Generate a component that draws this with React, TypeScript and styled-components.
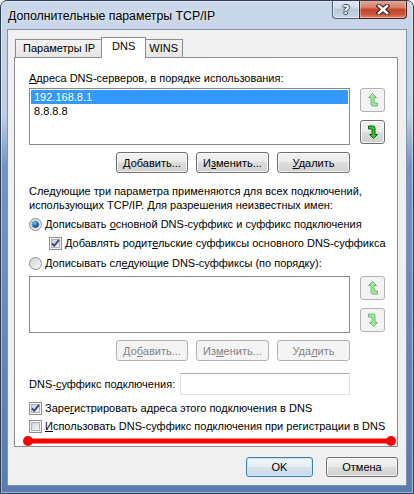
import React from 'react';
import styled, { createGlobalStyle, css } from 'styled-components';

const GlobalStyle = createGlobalStyle`
  html, body {
    margin: 0;
    padding: 0;
    background: #ffffff;
  }
  body {
    font-family: 'Liberation Sans', Arial, sans-serif;
    font-size: 11px;
    color: #000;
  }
  * {
    box-sizing: border-box;
  }
`;

const Window = styled.div`
  width: 414px;
  height: 494px;
  display: flex;
  flex-direction: column;
  border: 1px solid #2c3d55;
  border-radius: 7px 7px 0 0;
  background: linear-gradient(
    to bottom,
    #c9d7ea 0px,
    #bfcee3 115px,
    #7395c6 165px,
    #5a7baf 100%
  );
  box-shadow: inset 0 0 0 1px rgba(255, 255, 255, 0.45);
  overflow: hidden;
`;

const TitleBar = styled.div`
  height: 28px;
  flex: none;
  display: flex;
  align-items: flex-start;
`;

const Title = styled.div`
  flex: 1;
  padding: 7px 0 0 7px;
  font-size: 12.3px;
  line-height: 16px;
  text-shadow: 0 0 6px rgba(255, 255, 255, 0.9);
`;

const CaptionButtons = styled.div`
  display: flex;
  margin: -1px 6px 0 0;
`;

const HelpButton = styled.div`
  width: 27px;
  height: 19px;
  border: 1px solid #4c5d76;
  border-top: none;
  border-right: none;
  border-radius: 0 0 0 4px;
  background: linear-gradient(#e3eaf4 0%, #cfdbea 45%, #b6c6db 50%, #c8d5e6 100%);
  box-shadow: inset 0 0 0 1px rgba(255, 255, 255, 0.55);
  display: flex;
  align-items: center;
  justify-content: center;
  color: #fff;
  font-family: 'DejaVu Sans', sans-serif;
  font-weight: bold;
  font-size: 13px;
  text-shadow: 1px 0 0 #34465e, -1px 0 0 #34465e, 0 1px 0 #34465e, 0 -1px 0 #34465e;
`;

const CloseButton = styled.div`
  width: 48px;
  height: 19px;
  border: 1px solid #4a2018;
  border-top: none;
  border-radius: 0 0 4px 0;
  background: linear-gradient(#eaae9e 0%, #d67a66 45%, #c3432b 50%, #cc553b 80%, #e18b70 100%);
  box-shadow: inset 0 0 0 1px rgba(255, 255, 255, 0.35);
  display: flex;
  align-items: center;
  justify-content: center;
`;

const Client = styled.div`
  flex: 1;
  margin: 0 6px 7px 6px;
  border: 1px solid #8192aa;
  background: #f0f0f0;
  display: flex;
  flex-direction: column;
  padding: 0 8px 8px 6px;
`;

const TabControl = styled.div`
  flex: 1;
  display: flex;
  flex-direction: column;
`;

const TabRow = styled.div`
  height: 27px;
  flex: none;
  display: flex;
  align-items: flex-end;
  padding-left: 1px;
`;

const Tab = styled.div<{ $active?: boolean; $pad: number }>`
  height: 18px;
  padding: 0 ${(p) => p.$pad}px;
  border: 1px solid #898c95;
  border-bottom: none;
  line-height: 17px;
  background: linear-gradient(#f3f3f3, #e6e6e6);
  white-space: nowrap;
  ${(p) =>
    p.$active &&
    css`
      position: relative;
      z-index: 1;
      height: 21px;
      margin: 0 -2px -1px;
      background: #fff;
      line-height: 16px;
    `}
`;

const Panel = styled.div`
  flex: 1;
  border: 1px solid #898c95;
  background: #fff;
  padding: 13px 11px 0 14px;
  display: flex;
  flex-direction: column;
`;

const Label = styled.div`
  line-height: 15px;
  white-space: nowrap;
`;

const Key = styled.u`
  text-decoration: underline;
  text-underline-offset: 1px;
`;

const ListRow = styled.div<{ $top: number }>`
  display: flex;
  gap: 10px;
  align-items: flex-start;
  margin-top: ${(p) => p.$top}px;
`;

const ListBox = styled.div`
  width: 321px;
  height: 57px;
  border: 1px solid #828790;
  background: #fff;
  padding: 1px 0 0 1px;
`;

const ListItem = styled.div<{ $selected?: boolean }>`
  height: 14px;
  line-height: 14px;
  padding-left: 3px;
  margin-right: 1px;
  ${(p) =>
    p.$selected &&
    css`
      background: #3399ff;
      color: #fff;
    `}
`;

const ArrowColumn = styled.div`
  display: flex;
  flex-direction: column;
  gap: 8px;
`;

const buttonSkin = css<{ $disabled?: boolean }>`
  border: 1px solid #707070;
  border-radius: 3px;
  background: linear-gradient(#f2f2f2 0%, #ebebeb 50%, #dddddd 50%, #cfcfcf 100%);
  box-shadow: inset 0 0 0 1px rgba(255, 255, 255, 0.75);
  ${(p) =>
    p.$disabled &&
    css`
      border-color: #adb2b5;
      background: #f4f4f4;
      color: #838383;
      box-shadow: none;
    `}
`;

const ArrowButton = styled.div<{ $disabled?: boolean }>`
  ${buttonSkin};
  width: 25px;
  height: 24px;
  display: flex;
  align-items: center;
  justify-content: center;
`;

const ButtonRow = styled.div`
  width: 321px;
  display: flex;
  justify-content: flex-end;
  gap: 8px;
  margin-top: 7px;
`;

const Button = styled.div<{ $width: number; $disabled?: boolean; $default?: boolean }>`
  ${buttonSkin};
  width: ${(p) => p.$width}px;
  height: 21px;
  display: flex;
  align-items: center;
  justify-content: center;
  white-space: nowrap;
  ${(p) =>
    p.$default &&
    css`
      border-color: #3c7fb1;
      background: linear-gradient(#f0f5f9 0%, #e6eef5 50%, #d7e3ee 50%, #cbd9e6 100%);
      box-shadow: inset 0 0 0 1px #cde6f7;
    `}
`;

const Paragraph = styled.div`
  margin-top: 11px;
  line-height: 14px;
  white-space: nowrap;
`;

const Option = styled.div<{ $top: number; $indent?: number }>`
  display: flex;
  align-items: center;
  gap: 3px;
  height: 16px;
  margin-top: ${(p) => p.$top}px;
  margin-left: ${(p) => p.$indent ?? 0}px;
  white-space: nowrap;
`;

const OptionText = styled.span`
  line-height: 16px;
`;

const SuffixRow = styled.div`
  width: 321px;
  display: flex;
  align-items: center;
  justify-content: space-between;
  margin-top: 12px;
`;

const TextInput = styled.div`
  width: 170px;
  height: 22px;
  border: 1px solid #dbdfe6;
  border-top-color: #abadb3;
  background: #fff;
`;

const Marker = styled.svg`
  display: block;
  margin: 2px 0 0 -6px;
`;

const Footer = styled.div`
  flex: none;
  display: flex;
  justify-content: flex-end;
  gap: 13px;
  margin-top: 10px;
`;

const FooterButton = styled(Button)`
  height: 20px;
`;

const CloseIcon = () => (
  <svg width="14" height="11" viewBox="0 0 14 11">
    <path d="M3 2 L11 9 M11 2 L3 9" stroke="#3a1810" strokeWidth="4.6" strokeLinecap="square" />
    <path d="M3 2 L11 9 M11 2 L3 9" stroke="#ffffff" strokeWidth="2.6" strokeLinecap="square" />
  </svg>
);

const arrowColors = (disabled?: boolean) =>
  disabled ? { fill: '#a6e6a6', stroke: '#66bf66' } : { fill: '#2fcb2f', stroke: '#0f5f0f' };

const UpIcon = ({ disabled }: { disabled?: boolean }) => {
  const c = arrowColors(disabled);
  return (
    <svg width="10" height="14" viewBox="0 0 10 14">
      <path
        d="M4.5 0.5 L8.5 4.5 L6 4.5 L6 10 L9.5 10 L9.5 13 L5 13 Q3 13 3 11 L3 4.5 L0.5 4.5 Z"
        fill={c.fill}
        stroke={c.stroke}
        strokeWidth="1"
        strokeLinejoin="round"
      />
    </svg>
  );
};

const DownIcon = ({ disabled }: { disabled?: boolean }) => {
  const c = arrowColors(disabled);
  return (
    <svg width="10" height="14" viewBox="0 0 10 14">
      <path
        d="M0.5 1 L5 1 Q7 1 7 3 L7 9.5 L9.5 9.5 L5.5 13.5 L1.5 9.5 L4 9.5 L4 4 L0.5 4 Z"
        fill={c.fill}
        stroke={c.stroke}
        strokeWidth="1"
        strokeLinejoin="round"
      />
    </svg>
  );
};

const CheckBox = ({ checked }: { checked?: boolean }) => (
  <svg width="13" height="13" viewBox="0 0 13 13" style={{ flex: 'none' }}>
    <defs>
      <linearGradient id="cbfill" x1="0" y1="0" x2="1" y2="1">
        <stop offset="0" stopColor="#c9ced4" />
        <stop offset="1" stopColor="#f7f8f9" />
      </linearGradient>
    </defs>
    <rect x="0.5" y="0.5" width="12" height="12" fill="#f4f4f4" stroke="#8e8f8f" />
    <rect x="2.5" y="2.5" width="8" height="8" fill="url(#cbfill)" stroke="#aeb3b9" />
    {checked && (
      <path d="M3 6.3 L5.2 8.8 L10 2.8" fill="none" stroke="#34487a" strokeWidth="1.9" />
    )}
  </svg>
);

const Radio = ({ checked }: { checked?: boolean }) => (
  <svg width="13" height="13" viewBox="0 0 13 13" style={{ flex: 'none' }}>
    <defs>
      <linearGradient id="rdfill" x1="0" y1="0" x2="1" y2="1">
        <stop offset="0" stopColor="#cdd1d6" />
        <stop offset="1" stopColor="#fafafa" />
      </linearGradient>
      <radialGradient id="rddot" cx="0.4" cy="0.35" r="0.7">
        <stop offset="0" stopColor="#8fd0f7" />
        <stop offset="0.45" stopColor="#2a6fb4" />
        <stop offset="1" stopColor="#0f3868" />
      </radialGradient>
    </defs>
    <circle cx="6.5" cy="6.5" r="6" fill="url(#rdfill)" stroke="#8e8f8f" />
    {checked && <circle cx="6.5" cy="6.5" r="3.6" fill="url(#rddot)" stroke="#7fb6de" strokeWidth="0.8" />}
  </svg>
);

const DnsList = ({ items, upDisabled, downDisabled, top }: {
  items: string[];
  upDisabled?: boolean;
  downDisabled?: boolean;
  top: number;
}) => (
  <ListRow $top={top}>
    <ListBox>
      {items.map((item, i) => (
        <ListItem key={item} $selected={i === 0}>
          {item}
        </ListItem>
      ))}
    </ListBox>
    <ArrowColumn>
      <ArrowButton $disabled={upDisabled}>
        <UpIcon disabled={upDisabled} />
      </ArrowButton>
      <ArrowButton $disabled={downDisabled}>
        <DownIcon disabled={downDisabled} />
      </ArrowButton>
    </ArrowColumn>
  </ListRow>
);

const EditButtons = ({ disabled }: { disabled?: boolean }) => (
  <ButtonRow>
    <Button $width={72} $disabled={disabled}>
      {disabled ? <span>До<Key>б</Key>авить...</span> : <span><Key>Д</Key>обавить...</span>}
    </Button>
    <Button $width={73} $disabled={disabled}>
      {disabled ? <span>Из<Key>м</Key>енить...</span> : <span>И<Key>з</Key>менить...</span>}
    </Button>
    <Button $width={73} $disabled={disabled}>
      {disabled ? <span>Уда<Key>л</Key>ить</span> : <span><Key>У</Key>далить</span>}
    </Button>
  </ButtonRow>
);

export default function App() {
  return (
    <>
      <GlobalStyle />
      <Window>
        <TitleBar>
          <Title>Дополнительные параметры TCP/IP</Title>
          <CaptionButtons>
            <HelpButton>?</HelpButton>
            <CloseButton>
              <CloseIcon />
            </CloseButton>
          </CaptionButtons>
        </TitleBar>
        <Client>
          <TabControl>
            <TabRow>
              <Tab $pad={7}>Параметры IP</Tab>
              <Tab $pad={10} $active>
                DNS
              </Tab>
              <Tab $pad={4}>WINS</Tab>
            </TabRow>
            <Panel>
              <Label>
                <Key>А</Key>дреса DNS-серверов, в порядке использования:
              </Label>
              <DnsList top={2} items={['192.168.8.1', '8.8.8.8']} upDisabled />
              <EditButtons />
              <Paragraph>
                Следующие три параметра применяются для всех подключений,
                <br />
                использующих TCP/IP. Для разрешения неизвестных имен:
              </Paragraph>
              <Option $top={4}>
                <Radio checked />
                <OptionText>
                  Дописывать <Key>о</Key>сновной DNS-суффикс и суффикс подключения
                </OptionText>
              </Option>
              <Option $top={3} $indent={20}>
                <CheckBox checked />
                <OptionText>
                  Добавлять родит<Key>е</Key>льские суффиксы основного DNS-суффикса
                </OptionText>
              </Option>
              <Option $top={4}>
                <Radio />
                <OptionText>
                  Дописывать сл<Key>е</Key>дующие DNS-суффиксы (по порядку):
                </OptionText>
              </Option>
              <DnsList top={5} items={[]} upDisabled downDisabled />
              <EditButtons disabled />
              <SuffixRow>
                <Label>
                  DNS-<Key>с</Key>уффикс подключения:
                </Label>
                <TextInput />
              </SuffixRow>
              <Option $top={5}>
                <CheckBox checked />
                <OptionText>
                  Заре<Key>г</Key>истрировать адреса этого подключения в DNS
                </OptionText>
              </Option>
              <Option $top={2}>
                <CheckBox />
                <OptionText>
                  <Key>И</Key>спользовать DNS-суффикс подключения при регистрации в DNS
                </OptionText>
              </Option>
              <Marker width="373" height="10" viewBox="0 0 373 10">
                <line x1="5" y1="5" x2="368" y2="5" stroke="#ff0000" strokeWidth="5" />
                <circle cx="5" cy="5" r="5" fill="#ff0000" />
                <circle cx="368" cy="5" r="5" fill="#ff0000" />
              </Marker>
            </Panel>
          </TabControl>
          <Footer>
            <FooterButton $width={67} $default>
              OK
            </FooterButton>
            <FooterButton $width={72}>Отмена</FooterButton>
          </Footer>
        </Client>
      </Window>
    </>
  );
}
